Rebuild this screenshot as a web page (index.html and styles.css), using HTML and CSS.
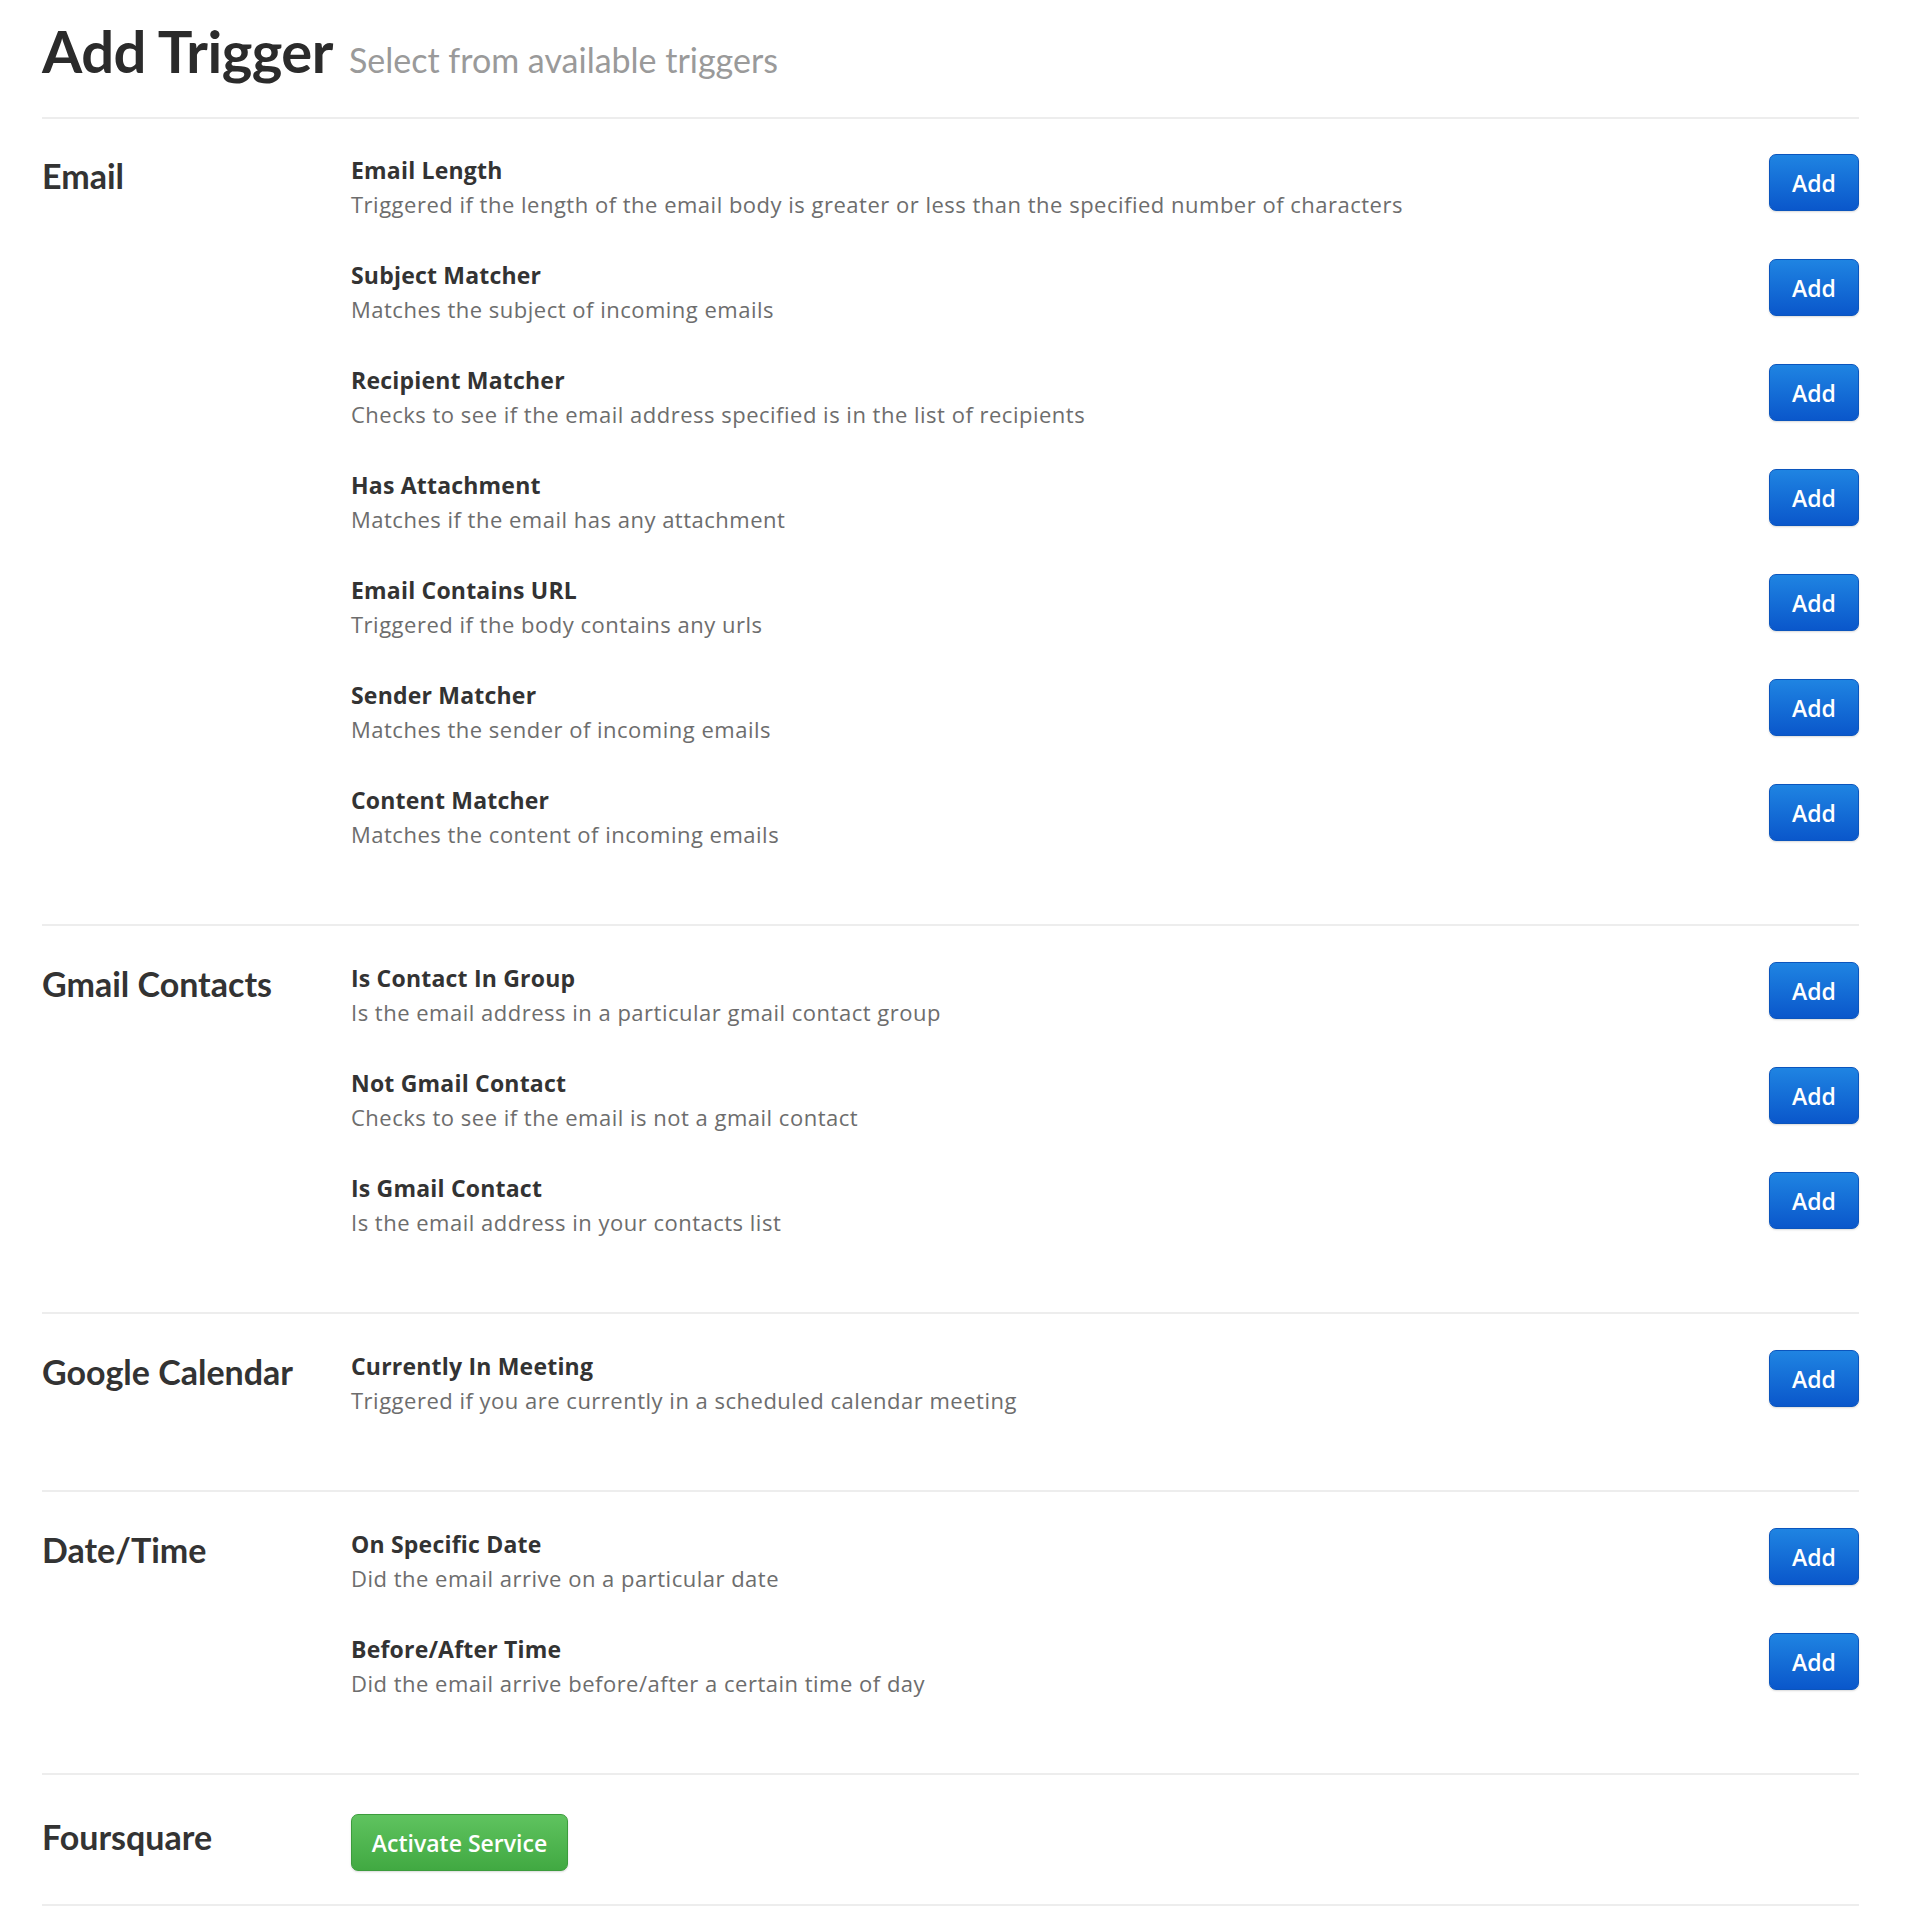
FILE: index.html
```html
<!DOCTYPE html>
<html lang="en">
<head>
    <meta charset="UTF-8">
    <meta name="viewport" content="width=device-width, initial-scale=1.0">
    <title>Add Trigger</title>
    <link rel="stylesheet" href="styles.css">
</head>
<body>

    <div class="page">
        <div class="page-header">
            <h1>Add Trigger</h1>
            <span class="subtitle">Select from available triggers</span>
        </div>

        <section class="service">
            <h2 class="service-name">Email</h2>
            <div class="trigger-list">
                <div class="trigger">
                    <div class="trigger-info">
                        <h3>Email Length</h3>
                        <p>Triggered if the length of the email body is greater or less than the specified number of characters</p>
                    </div>
                    <button class="btn btn-add">Add</button>
                </div>
                <div class="trigger">
                    <div class="trigger-info">
                        <h3>Subject Matcher</h3>
                        <p>Matches the subject of incoming emails</p>
                    </div>
                    <button class="btn btn-add">Add</button>
                </div>
                <div class="trigger">
                    <div class="trigger-info">
                        <h3>Recipient Matcher</h3>
                        <p>Checks to see if the email address specified is in the list of recipients</p>
                    </div>
                    <button class="btn btn-add">Add</button>
                </div>
                <div class="trigger">
                    <div class="trigger-info">
                        <h3>Has Attachment</h3>
                        <p>Matches if the email has any attachment</p>
                    </div>
                    <button class="btn btn-add">Add</button>
                </div>
                <div class="trigger">
                    <div class="trigger-info">
                        <h3>Email Contains URL</h3>
                        <p>Triggered if the body contains any urls</p>
                    </div>
                    <button class="btn btn-add">Add</button>
                </div>
                <div class="trigger">
                    <div class="trigger-info">
                        <h3>Sender Matcher</h3>
                        <p>Matches the sender of incoming emails</p>
                    </div>
                    <button class="btn btn-add">Add</button>
                </div>
                <div class="trigger">
                    <div class="trigger-info">
                        <h3>Content Matcher</h3>
                        <p>Matches the content of incoming emails</p>
                    </div>
                    <button class="btn btn-add">Add</button>
                </div>
            </div>
        </section>

        <section class="service">
            <h2 class="service-name">Gmail Contacts</h2>
            <div class="trigger-list">
                <div class="trigger">
                    <div class="trigger-info">
                        <h3>Is Contact In Group</h3>
                        <p>Is the email address in a particular gmail contact group</p>
                    </div>
                    <button class="btn btn-add">Add</button>
                </div>
                <div class="trigger">
                    <div class="trigger-info">
                        <h3>Not Gmail Contact</h3>
                        <p>Checks to see if the email is not a gmail contact</p>
                    </div>
                    <button class="btn btn-add">Add</button>
                </div>
                <div class="trigger">
                    <div class="trigger-info">
                        <h3>Is Gmail Contact</h3>
                        <p>Is the email address in your contacts list</p>
                    </div>
                    <button class="btn btn-add">Add</button>
                </div>
            </div>
        </section>

        <section class="service">
            <h2 class="service-name">Google Calendar</h2>
            <div class="trigger-list">
                <div class="trigger">
                    <div class="trigger-info">
                        <h3>Currently In Meeting</h3>
                        <p>Triggered if you are currently in a scheduled calendar meeting</p>
                    </div>
                    <button class="btn btn-add">Add</button>
                </div>
            </div>
        </section>

        <section class="service">
            <h2 class="service-name">Date/Time</h2>
            <div class="trigger-list">
                <div class="trigger">
                    <div class="trigger-info">
                        <h3>On Specific Date</h3>
                        <p>Did the email arrive on a particular date</p>
                    </div>
                    <button class="btn btn-add">Add</button>
                </div>
                <div class="trigger">
                    <div class="trigger-info">
                        <h3>Before/After Time</h3>
                        <p>Did the email arrive before/after a certain time of day</p>
                    </div>
                    <button class="btn btn-add">Add</button>
                </div>
            </div>
        </section>

        <section class="service service-inactive">
            <h2 class="service-name">Foursquare</h2>
            <div class="trigger-list">
                <button class="btn btn-activate">Activate Service</button>
            </div>
        </section>
    </div>

</body>
</html>
```

FILE: styles.css
```css
:root {
    --text-dark: #2b2b2b;
    --text-body: #333333;
    --text-muted: #6d6d6d;
    --text-light: #9a9a9a;
    --rule: #ededed;
}

body {
    margin: 0;
    background-color: #ffffff;
    font-family: Lato, "Open Sans", Arial, sans-serif;
    color: var(--text-body);
}

.page {
    width: 1817px;
    margin-left: 42px;
    padding-top: 19px;
}

.page-header {
    display: flex;
    align-items: baseline;
    gap: 16px;
    padding-bottom: 34px;
    border-bottom: 2px solid var(--rule);
}

.page-header h1 {
    margin: 0;
    font-size: 58px;
    line-height: 64px;
    font-weight: 700;
    color: var(--text-dark);
    letter-spacing: -0.5px;
}

.page-header .subtitle {
    font-size: 34px;
    color: var(--text-light);
}

.service {
    display: flex;
    padding: 34px 0 36px;
    border-bottom: 2px solid var(--rule);
}

.service + .service {
    padding-top: 35px;
}

.service-name {
    width: 309px;
    flex-shrink: 0;
    margin: 0;
    font-size: 34px;
    line-height: 46px;
    font-weight: 700;
    color: var(--text-body);
}

.service-inactive {
    padding-bottom: 33px;
}

.service-inactive .service-name {
    margin-top: 4px;
}

.trigger-list {
    flex: 1;
}

.trigger {
    display: flex;
    justify-content: space-between;
    align-items: flex-start;
    margin-bottom: 37px;
}

.trigger-info h3,
.trigger-info p {
    font-family: "Open Sans", Lato, Arial, sans-serif;
    margin: 0;
    line-height: 34px;
}

.trigger-info h3 {
    font-size: 23px;
    font-weight: 700;
    letter-spacing: 0.2px;
    color: var(--text-body);
}

.trigger-info p {
    font-size: 22px;
    letter-spacing: 0.5px;
    color: var(--text-muted);
}

.btn {
    font-family: "Open Sans", Lato, Arial, sans-serif;
    font-weight: 600;
    font-size: 23px;
    color: #ffffff;
    border-radius: 7px;
    cursor: pointer;
    height: 57px;
    padding: 0;
}

.btn-add {
    width: 90px;
    margin-top: 1px;
    background: linear-gradient(to bottom, #1f84e2, #0a57cb);
    border: 1px solid #0b55bd;
    box-shadow: 0 1px 2px rgba(0, 0, 0, 0.15);
}

.btn-activate {
    width: 217px;
    margin: 4px 0 0;
    background: linear-gradient(to bottom, #5fc35f, #41a942);
    border: 1px solid #3c9c3d;
    box-shadow: 0 1px 2px rgba(0, 0, 0, 0.15);
}
```
